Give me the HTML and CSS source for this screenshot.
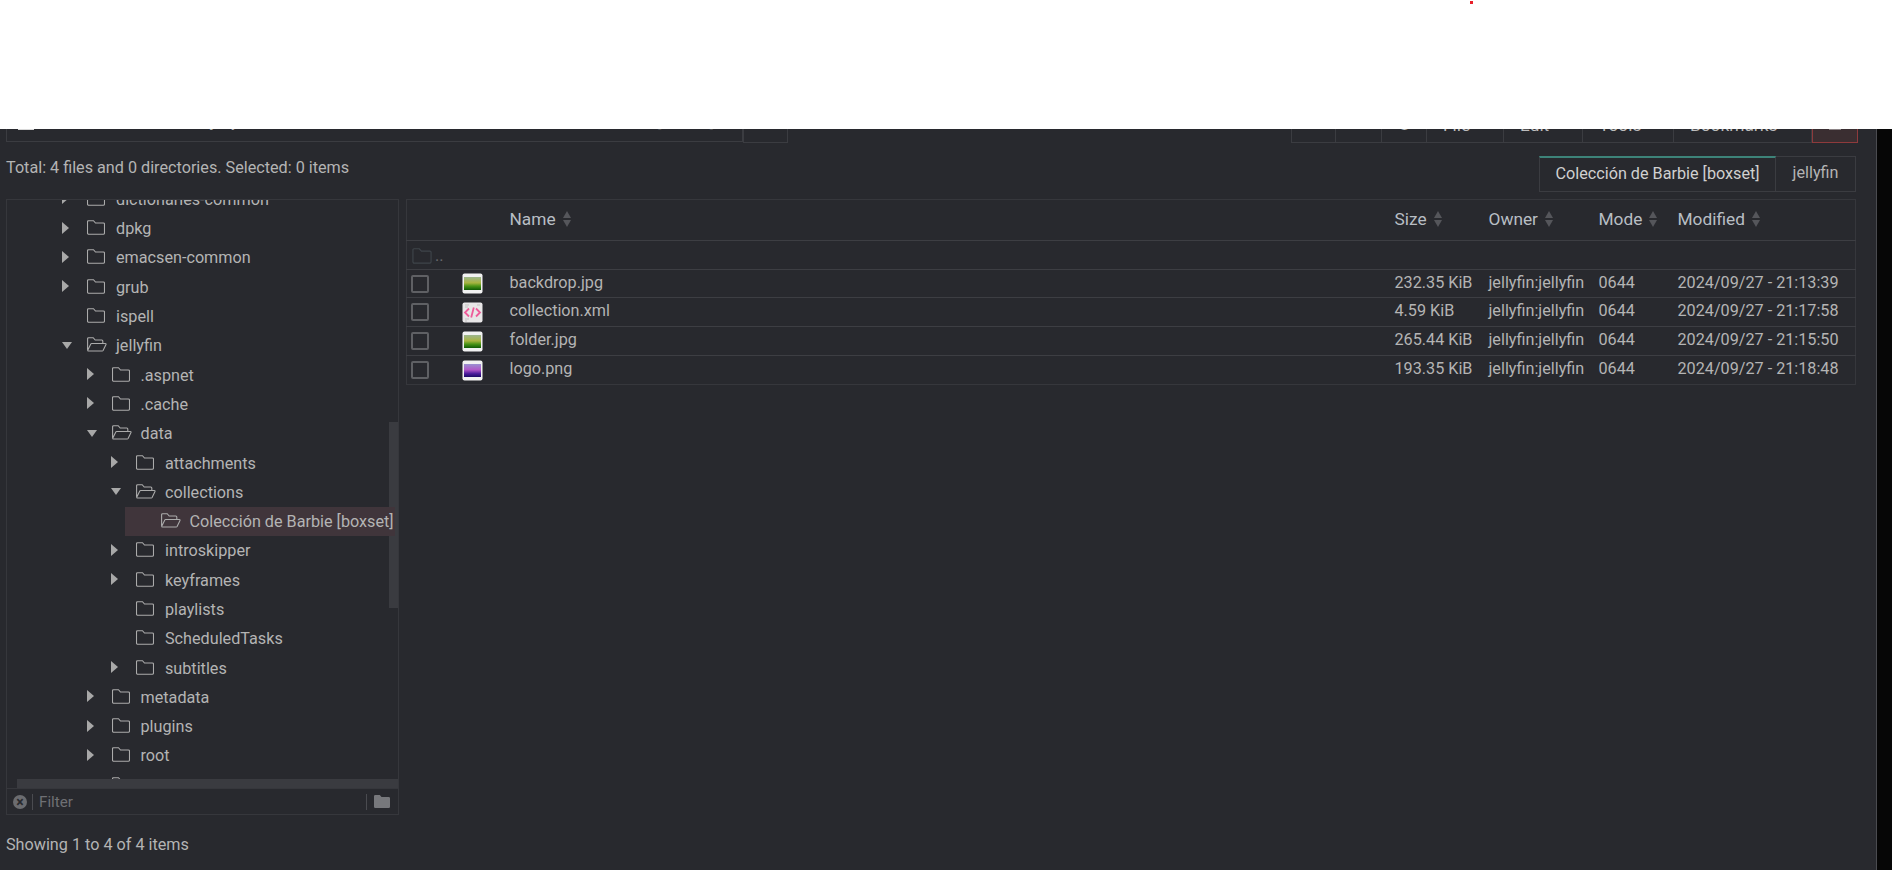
FILE: index.html
```html
<!DOCTYPE html>
<html>
<head>
<meta name="viewport" content="width=device-width, initial-scale=1">
<title>File manager</title>
<link rel="stylesheet" href="styles.css">
</head>
<body>

<svg class="defs" width="0" height="0">
  <defs>
    <symbol id="folder" viewBox="0 0 18 15">
      <path d="M1.500 .7h5l2 2.300h8a1 1 0 0 1 1 1v9a1.200 1.200 0 0 1-1.200 1.200H1.700A1.200 1.200 0 0 1 .5 13V1.700a1 1 0 0 1 1-1z" fill="none" stroke="currentColor" stroke-width="1.100"/>
    </symbol>
    <symbol id="folder-open" viewBox="0 0 20 15">
      <path d="M.6 13.600V1.700a1 1 0 0 1 1-1h4.600l2 2.300h6.600a1 1 0 0 1 1 1v2.300M.6 13.600l3.200-6.600a1 1 0 0 1 .9-.5h13.700a.7.7 0 0 1 .6 1l-2.900 6a1 1 0 0 1-.9.5H1.400a.8.8 0 0 1-.8-.8z" fill="none" stroke="currentColor" stroke-width="1.100"/>
    </symbol>
    <linearGradient id="green" x1="0" y1="0" x2="0" y2="1">
      <stop offset="0" stop-color="#9db68e"/>
      <stop offset=".45" stop-color="#a8b440"/>
      <stop offset=".7" stop-color="#4a9416"/>
      <stop offset="1" stop-color="#0f5a06"/>
    </linearGradient>
    <linearGradient id="purple" x1="0" y1="0" x2="0" y2="1">
      <stop offset="0" stop-color="#9a90d0"/>
      <stop offset=".45" stop-color="#b056c8"/>
      <stop offset=".75" stop-color="#4a1a9a"/>
      <stop offset="1" stop-color="#1c0a66"/>
    </linearGradient>
    <symbol id="thumb-green" viewBox="0 0 21 21">
      <rect x=".5" y=".5" width="20" height="20" rx="2" fill="#f1f1f1"/>
      <rect x="2" y="4" width="17" height="13" fill="url(#green)"/>
    </symbol>
    <symbol id="thumb-purple" viewBox="0 0 21 21">
      <rect x=".5" y=".5" width="20" height="20" rx="2" fill="#f1f1f1"/>
      <rect x="2" y="4" width="17" height="13" fill="url(#purple)"/>
    </symbol>
    <symbol id="thumb-xml" viewBox="0 0 21 21">
      <rect x=".5" y=".5" width="20" height="20" rx="2" fill="#e8e6e7"/>
      <path d="M3 3h4M3 5h3M15 3h3M3 17h4M3 19h2" stroke="#c4c2c3" stroke-width="1"/>
      <path d="M7 6.500l-4 4 4 4M14 6.500l4 4-4 4M11.800 5.500l-2.600 10" fill="none" stroke="#ee5c9a" stroke-width="1.800"/>
    </symbol>
  </defs>
</svg>

<div class="banner"><span class="red-dot"></span></div>

<div class="page">
  <div class="main">

    <div class="toolbar">
      <div class="path-group">
        <div class="path-box">
          <span class="path-icon"></span>
          <span class="crumb">/</span><span class="crumb">var</span><span class="crumb">/</span><span class="crumb">lib</span><span class="crumb">/</span><span class="crumb">jellyfin</span><span class="crumb">/</span><span class="crumb">data</span><span class="crumb">/</span><span class="crumb">collections</span><span class="crumb">/</span><span class="crumb">Colección de Barbie [boxset]</span>
        </div>
        <div class="path-btn"><span class="path-icon"></span></div>
      </div>
      <div class="tool-group">
        <div class="tool tool-icon"></div>
        <div class="tool tool-icon"></div>
        <div class="tool tool-icon">↻</div>
        <div class="tool tool-file">File</div>
        <div class="tool tool-edit">Edit</div>
        <div class="tool tool-tools">Tools</div>
        <div class="tool tool-marks">Bookmarks</div>
        <div class="tool tool-close"><span class="path-icon"></span></div>
      </div>
    </div>

    <div class="status">
      <div class="total">Total: 4 files and 0 directories. Selected: 0 items</div>
      <div class="tabs">
        <div class="tab tab-active">Colección de Barbie [boxset]</div>
        <div class="tab">jellyfin</div>
      </div>
    </div>

    <div class="panes">
      <div class="tree-pane">
        <div class="tree-view">
          <ul class="tree">
            <li class="node l0"><i class="arrow right"></i><svg class="ico"><use href="#folder"/></svg>dictionaries-common</li>
            <li class="node l0"><i class="arrow right"></i><svg class="ico"><use href="#folder"/></svg>dpkg</li>
            <li class="node l0"><i class="arrow right"></i><svg class="ico"><use href="#folder"/></svg>emacsen-common</li>
            <li class="node l0"><i class="arrow right"></i><svg class="ico"><use href="#folder"/></svg>grub</li>
            <li class="node l0"><i class="arrow"></i><svg class="ico"><use href="#folder"/></svg>ispell</li>
            <li class="node l0"><i class="arrow down"></i><svg class="ico ico-open"><use href="#folder-open"/></svg>jellyfin</li>
            <li class="node l1"><i class="arrow right"></i><svg class="ico"><use href="#folder"/></svg>.aspnet</li>
            <li class="node l1"><i class="arrow right"></i><svg class="ico"><use href="#folder"/></svg>.cache</li>
            <li class="node l1"><i class="arrow down"></i><svg class="ico ico-open"><use href="#folder-open"/></svg>data</li>
            <li class="node l2"><i class="arrow right"></i><svg class="ico"><use href="#folder"/></svg>attachments</li>
            <li class="node l2"><i class="arrow down"></i><svg class="ico ico-open"><use href="#folder-open"/></svg>collections</li>
            <li class="node l3 selected"><i class="arrow"></i><svg class="ico ico-open"><use href="#folder-open"/></svg>Colección de Barbie [boxset]</li>
            <li class="node l2"><i class="arrow right"></i><svg class="ico"><use href="#folder"/></svg>introskipper</li>
            <li class="node l2"><i class="arrow right"></i><svg class="ico"><use href="#folder"/></svg>keyframes</li>
            <li class="node l2"><i class="arrow"></i><svg class="ico"><use href="#folder"/></svg>playlists</li>
            <li class="node l2"><i class="arrow"></i><svg class="ico"><use href="#folder"/></svg>ScheduledTasks</li>
            <li class="node l2"><i class="arrow right"></i><svg class="ico"><use href="#folder"/></svg>subtitles</li>
            <li class="node l1"><i class="arrow right"></i><svg class="ico"><use href="#folder"/></svg>metadata</li>
            <li class="node l1"><i class="arrow right"></i><svg class="ico"><use href="#folder"/></svg>plugins</li>
            <li class="node l1"><i class="arrow right"></i><svg class="ico"><use href="#folder"/></svg>root</li>
            <li class="node l1"><i class="arrow"></i><svg class="ico"><use href="#folder"/></svg>users</li>
          </ul>
          <div class="vbar"></div>
          <div class="hbar"></div>
        </div>
        <div class="filter">
          <span class="clear">×</span>
          <span class="filter-text">Filter</span>
          <svg class="filter-folder" viewBox="0 0 16 13"><path d="M1.300 0h4.500l1.700 2h7.200A1.300 1.300 0 0 1 16 3.300v8.400a1.300 1.300 0 0 1-1.300 1.300H1.300A1.300 1.300 0 0 1 0 11.700V1.300A1.300 1.300 0 0 1 1.300 0z"/></svg>
        </div>
      </div>

      <div class="files-pane">
        <table class="files">
          <colgroup>
            <col class="c-check"><col class="c-thumb"><col class="c-name"><col class="c-size"><col class="c-owner"><col class="c-mode"><col class="c-date">
          </colgroup>
          <thead>
            <tr>
              <th></th>
              <th></th>
              <th>Name<span class="sort"></span></th>
              <th>Size<span class="sort"></span></th>
              <th>Owner<span class="sort"></span></th>
              <th>Mode<span class="sort"></span></th>
              <th>Modified<span class="sort"></span></th>
            </tr>
          </thead>
          <tbody>
            <tr class="parent">
              <td colspan="7"><svg class="parent-ico"><use href="#folder"/></svg><span class="dots">..</span></td>
            </tr>
            <tr class="first-row">
              <td class="box"><span class="check"></span></td>
              <td class="box"><svg class="thumb"><use href="#thumb-green"/></svg></td>
              <td>backdrop.jpg</td><td>232.35 KiB</td><td>jellyfin:jellyfin</td><td>0644</td><td>2024/09/27 - 21:13:39</td>
            </tr>
            <tr>
              <td class="box"><span class="check"></span></td>
              <td class="box"><svg class="thumb"><use href="#thumb-xml"/></svg></td>
              <td>collection.xml</td><td>4.59 KiB</td><td>jellyfin:jellyfin</td><td>0644</td><td>2024/09/27 - 21:17:58</td>
            </tr>
            <tr>
              <td class="box"><span class="check"></span></td>
              <td class="box"><svg class="thumb"><use href="#thumb-green"/></svg></td>
              <td>folder.jpg</td><td>265.44 KiB</td><td>jellyfin:jellyfin</td><td>0644</td><td>2024/09/27 - 21:15:50</td>
            </tr>
            <tr>
              <td class="box"><span class="check"></span></td>
              <td class="box"><svg class="thumb"><use href="#thumb-purple"/></svg></td>
              <td>logo.png</td><td>193.35 KiB</td><td>jellyfin:jellyfin</td><td>0644</td><td>2024/09/27 - 21:18:48</td>
            </tr>
          </tbody>
        </table>
      </div>
    </div>

    <div class="showing">Showing 1 to 4 of 4 items</div>

  </div>
  <div class="gutter"></div>
</div>

</body>
</html>
```

FILE: styles.css
```css
* {
  box-sizing: border-box;
}

html, body {
  margin: 0;
  height: 870px;
  overflow: hidden;
}

body {
  background: #28292e;
  color: #b4b4b4;
  font-family: Roboto, "Noto Sans", sans-serif;
  font-size: 16.2px;
}

.defs {
  position: absolute;
}

.banner {
  position: relative;
  height: 129px;
  background: #fff;
}

.red-dot {
  position: absolute;
  left: 1470px;
  top: 1px;
  width: 3px;
  height: 3px;
  background: #e8202a;
}

.page {
  display: flex;
  height: 741px;
}

.main {
  flex: 1;
  min-width: 0;
}

.gutter {
  width: 16px;
  background: #060606;
  border-left: 1px solid #4a4b50;
}

/* toolbar, only its lower edge shows under the banner */
.toolbar {
  display: flex;
  justify-content: space-between;
  align-items: flex-end;
  height: 14px;
  padding: 0 18px 0 6px;
  overflow: hidden;
}

.path-group {
  display: flex;
  align-items: flex-end;
}

.path-box {
  display: flex;
  align-items: flex-end;
  width: 737px;
  height: 40px;
  margin-bottom: 1px;
  padding: 0 0 11px 11px;
  border: 1px solid #3b3c41;
  white-space: nowrap;
}

.path-box .path-icon {
  margin-right: 15px;
}

.crumb {
  margin-right: 20.500px;
  line-height: 16px;
}

.path-icon {
  display: block;
  width: 16px;
  height: 16px;
  background: #d8d8d8;
}

.path-btn {
  display: flex;
  justify-content: center;
  align-items: flex-end;
  width: 45px;
  height: 41px;
  padding-bottom: 13px;
  border: 1px solid #3b3c41;
}

.tool-group {
  display: flex;
  align-items: flex-end;
}

.tool {
  height: 40px;
  padding: 12.500px 0 0 16px;
  border: 1px solid #3b3c41;
  border-left-width: 0;
  font-size: 17.300px;
  line-height: 16px;
  color: #bdbdbd;
}

.tool:first-child {
  border-left-width: 1px;
}

.tool-icon {
  width: 45.330px;
  padding-left: 0;
  text-align: center;
}

.tool-file {
  width: 77px;
}

.tool-edit {
  width: 79px;
}

.tool-tools {
  width: 91px;
}

.tool-marks {
  width: 138px;
}

.tool-close {
  display: flex;
  justify-content: center;
  align-items: flex-end;
  width: 46px;
  padding: 0 0 12px;
  background: #3a2e31;
  border: 1px solid #8e3a3c;
}

.tool-close .path-icon {
  width: 12px;
  background: #8c8486;
}

/* status line with the tabs */
.status {
  display: flex;
  justify-content: space-between;
  height: 56px;
  padding: 13px 20px 0 6px;
}

.total {
  line-height: 24px;
}

.tabs {
  display: flex;
  height: 36px;
}

.tab {
  padding: 0 16.500px;
  border: 1px solid #3b3c41;
  border-left-width: 0;
  line-height: 32px;
}

.tab-active {
  padding: 0 15.500px;
  border-left-width: 1px;
  border-top: 2px solid #3d8379;
  color: #d0d0d0;
}

/* tree and file list */
.panes {
  display: flex;
  align-items: flex-start;
  gap: 7px;
  padding-left: 6px;
}

.tree-pane {
  width: 393px;
}

.tree-view {
  position: relative;
  height: 589px;
  overflow: hidden;
  border: 1px solid #36373c;
  border-bottom: 0;
}

.tree {
  margin: -15.300px 0 0;
  padding: 0;
  list-style: none;
}

.node {
  display: flex;
  align-items: center;
  height: 29.300px;
  white-space: nowrap;
}

.node.l0 {
  padding-left: 55px;
}

.node.l1 {
  padding-left: 79.500px;
}

.node.l2 {
  padding-left: 104px;
}

.node.l3 {
  padding-left: 128.500px;
}

.node.selected {
  position: relative;
  z-index: 1;
  width: 270px;
  margin-left: 118px;
  padding-left: 10.500px;
  background: #40353b;
}

.arrow {
  flex: none;
  display: block;
  width: 25px;
  height: 12px;
  position: relative;
  top: -1px;
}

.arrow.right::before {
  content: "";
  display: block;
  border-left: 7px solid #a8a8a8;
  border-top: 6px solid transparent;
  border-bottom: 6px solid transparent;
  width: 0;
}

.arrow.down::before {
  content: "";
  display: block;
  margin-top: 3px;
  border-top: 7px solid #a8a8a8;
  border-left: 5.500px solid transparent;
  border-right: 5.500px solid transparent;
  width: 0;
}

.ico {
  flex: none;
  width: 18px;
  height: 15px;
  margin-right: 11px;
  position: relative;
  top: -1px;
  color: #ababab;
  overflow: visible;
}

.ico-open {
  width: 20px;
  margin-right: 9px;
}

.vbar {
  position: absolute;
  right: 0;
  top: 222px;
  width: 9px;
  height: 186px;
  background: #3a3b40;
}

.hbar {
  position: absolute;
  left: 10px;
  right: 0;
  bottom: 0;
  height: 9px;
  background: #3a3b40;
}

.filter {
  display: flex;
  align-items: center;
  height: 27px;
  padding: 0 8px 0 6px;
  border: 1px solid #36373c;
}

.clear {
  width: 14px;
  height: 14px;
  border-radius: 50%;
  background: #6b6c70;
  color: #28292e;
  font-size: 14px;
  font-weight: 700;
  line-height: 14px;
  text-align: center;
}

.filter-text {
  flex: 1;
  margin: 0 7px 0 5px;
  padding-left: 6px;
  border-left: 1px solid #4a4b50;
  border-right: 1px solid #4a4b50;
  color: #6f7074;
  font-size: 15.200px;
  line-height: 16px;
}

.filter-folder {
  width: 16px;
  height: 13px;
  fill: #77787c;
}

.files-pane {
  flex: 1;
  min-width: 0;
  padding-right: 20px;
}

.files {
  width: 100%;
  border-collapse: collapse;
  table-layout: fixed;
  border: 1px solid #36373c;
}

.c-check {
  width: 51px;
}

.c-thumb {
  width: 52px;
}

.c-name {
  width: 885px;
}

.c-size {
  width: 94px;
}

.c-owner {
  width: 110px;
}

.c-mode {
  width: 79px;
}

.files th {
  height: 41px;
  padding: 0 0 3px;
  font-size: 17.300px;
  font-weight: 400;
  text-align: left;
  color: #b8bec4;
}

.files td {
  height: 29px;
  padding: 0 0 3px;
  border-top: 1px solid #3d3e43;
  white-space: nowrap;
}

.files .first-row td {
  height: 28px;
}

.files td.box {
  padding: 0;
}

.parent td {
  padding: 0 0 0 5px;
}

.parent-ico {
  width: 20px;
  height: 16px;
  color: #3e444a;
  vertical-align: middle;
}

.dots {
  margin-left: 3px;
  color: #6a6b6f;
}

.sort {
  display: inline-block;
  position: relative;
  width: 8px;
  height: 16px;
  margin-left: 7px;
  vertical-align: -2px;
}

.sort::before, .sort::after {
  content: "";
  position: absolute;
  left: 0;
  border-left: 4px solid transparent;
  border-right: 4px solid transparent;
}

.sort::before {
  top: 0;
  border-bottom: 7px solid #55565b;
}

.sort::after {
  bottom: 0;
  border-top: 7px solid #55565b;
}

.check {
  display: block;
  width: 18px;
  height: 18px;
  margin-left: 4px;
  border: 2px solid #5f6064;
  border-radius: 2px;
}

.thumb {
  display: block;
  width: 21px;
  height: 21px;
  margin-left: 4px;
}

.showing {
  margin: 18px 0 0 6px;
  line-height: 24px;
}
```
